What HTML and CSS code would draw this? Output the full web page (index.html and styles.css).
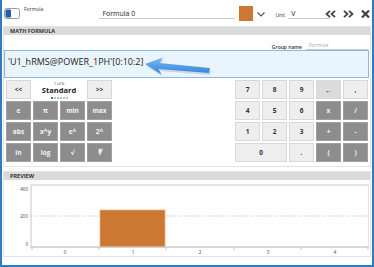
FILE: index.html
```html
<!DOCTYPE html>
<html lang="en">
<head>
    <meta charset="UTF-8">
    <title>Math Formula</title>
    <link rel="stylesheet" href="styles.css">
</head>
<body>
    <div class="window">
        <div class="topbar">
            <svg class="toggle" width="16" height="11" viewBox="0 0 16 11">
                <rect x="0.5" y="0.5" width="15" height="10" rx="2" fill="#fff" stroke="#9c9c9c"/>
                <rect x="1.5" y="1.5" width="5.5" height="8" rx="1" fill="#1f5fb2"/>
            </svg>
            <span class="small-label">Formula</span>
            <div class="line-input name-input">Formula 0</div>
            <div class="swatch"></div>
            <svg class="chevron" width="8" height="5" viewBox="0 0 8 5">
                <polyline points="0.5,0.5 4,4 7.5,0.5" fill="none" stroke="#555" stroke-width="1.2"/>
            </svg>
            <span class="small-label unit-label">Unit</span>
            <div class="line-input unit-input">V</div>
            <div class="nav">
                <svg width="11" height="8" viewBox="0 0 11 8">
                    <polyline points="5,0.8 1.5,4 5,7.2" fill="none" stroke="#444" stroke-width="1.8"/>
                    <polyline points="10,0.8 6.5,4 10,7.2" fill="none" stroke="#444" stroke-width="1.8"/>
                </svg>
                <svg width="11" height="8" viewBox="0 0 11 8">
                    <polyline points="1,0.8 4.5,4 1,7.2" fill="none" stroke="#444" stroke-width="1.8"/>
                    <polyline points="6,0.8 9.5,4 6,7.2" fill="none" stroke="#444" stroke-width="1.8"/>
                </svg>
                <svg width="9" height="8" viewBox="0 0 9 8">
                    <line x1="1" y1="0.5" x2="8" y2="7.5" stroke="#444" stroke-width="2.2"/>
                    <line x1="8" y1="0.5" x2="1" y2="7.5" stroke="#444" stroke-width="2.2"/>
                </svg>
            </div>
        </div>

        <div class="panel formula-panel">
            <div class="panel-title">MATH FORMULA</div>
            <div class="group-row">
                <span class="group-label">Group name</span>
                <div class="line-input group-input">Formula</div>
            </div>
            <div class="formula-box">'U1_hRMS@POWER_1PH'[0:10:2]</div>

            <svg class="pointer" width="70" height="22" viewBox="0 0 70 22">
                <defs>
                    <linearGradient id="arrowFill" x1="0" y1="0" x2="0" y2="1">
                        <stop offset="0" stop-color="#7ab8f2"/>
                        <stop offset="1" stop-color="#2f86dc"/>
                    </linearGradient>
                </defs>
                <polygon points="1,7 19,0.5 15.5,6 66,11 65,16 14.5,12 17.5,17.5" fill="#9aa4b0" opacity="0.35" transform="translate(1,2)"/>
                <polygon points="1,7 19,0.5 15.5,6 66,11 65,16 14.5,12 17.5,17.5" fill="url(#arrowFill)"/>
            </svg>

            <div class="keypads">
                <div class="pad pad-left">
                    <button class="key light">&lt;&lt;</button>
                    <div class="pager">
                        <span class="pager-count">1 of 6</span>
                        <span class="pager-name">Standard</span>
                        <span class="pager-dots"><i class="on"></i><i></i><i></i><i></i><i></i><i></i></span>
                    </div>
                    <button class="key light">&gt;&gt;</button>
                    <button class="key dark">e</button>
                    <button class="key dark">π</button>
                    <button class="key dark">min</button>
                    <button class="key dark">max</button>
                    <button class="key dark">abs</button>
                    <button class="key dark">x^y</button>
                    <button class="key dark">e^</button>
                    <button class="key dark">2^</button>
                    <button class="key dark">ln</button>
                    <button class="key dark">log</button>
                    <button class="key dark">√</button>
                    <button class="key dark">∛</button>
                </div>
                <div class="pad pad-right">
                    <button class="key light">7</button>
                    <button class="key light">8</button>
                    <button class="key light">9</button>
                    <button class="key mid">←</button>
                    <button class="key light">,</button>
                    <button class="key light">4</button>
                    <button class="key light">5</button>
                    <button class="key light">6</button>
                    <button class="key dark">x</button>
                    <button class="key dark">/</button>
                    <button class="key light">1</button>
                    <button class="key light">2</button>
                    <button class="key light">3</button>
                    <button class="key dark">+</button>
                    <button class="key dark">-</button>
                    <button class="key light wide">0</button>
                    <button class="key light">.</button>
                    <button class="key dark">(</button>
                    <button class="key dark">)</button>
                </div>
            </div>
        </div>

        <div class="panel preview-panel">
            <div class="panel-title">PREVIEW</div>
            <svg class="chart" width="364" height="76" viewBox="0 0 364 76">
                <rect x="26" y="5" width="338" height="62" fill="#fff" stroke="#dcdcdc" stroke-width="1.6"/>
                <line x1="26" y1="36" x2="364" y2="36" stroke="#b8b8b8" stroke-width="0.8" stroke-dasharray="1.5,1.5"/>
                <rect x="95" y="30" width="65" height="37" fill="#cc7732" stroke="#e6b08a" stroke-width="0.8"/>
                <line x1="26" y1="67" x2="364" y2="67" stroke="#cfcfcf" stroke-width="1.2"/>
                <g stroke="#bbb" stroke-width="0.8">
                    <line x1="27" y1="67" x2="27" y2="70"/>
                    <line x1="94" y1="67" x2="94" y2="70"/>
                    <line x1="161" y1="67" x2="161" y2="70"/>
                    <line x1="229" y1="67" x2="229" y2="70"/>
                    <line x1="296" y1="67" x2="296" y2="70"/>
                    <line x1="363" y1="67" x2="363" y2="70"/>
                </g>
                <g class="axis-text" text-anchor="end">
                    <text x="23" y="11">400</text>
                    <text x="23" y="38">200</text>
                    <text x="23" y="66">0</text>
                </g>
                <g class="axis-text" text-anchor="middle">
                    <text x="60" y="74">0</text>
                    <text x="128" y="74">1</text>
                    <text x="195" y="74">2</text>
                    <text x="263" y="74">3</text>
                    <text x="330" y="74">4</text>
                </g>
            </svg>
        </div>
    </div>
</body>
</html>
```

FILE: styles.css
```css
* {
    margin: 0;
    padding: 0;
    box-sizing: border-box;
}

body {
    font-family: 'Open Sans', 'Liberation Sans', sans-serif;
    background: #ffffff;
    color: #333333;
}

.window {
    width: 374px;
    height: 267px;
    border: 2px solid #2f7bc4;
    border-top: none;
    padding: 0 1px;
    background: #ffffff;
}

/* top bar */

.topbar {
    height: 26px;
    display: flex;
    align-items: flex-start;
    position: relative;
}

.toggle {
    margin: 8px 0 0 1px;
}

.small-label {
    font-size: 5px;
    color: #333;
    margin: 6px 0 0 4px;
}

.line-input {
    border-bottom: 1px solid #c8c8c8;
    font-size: 7px;
    color: #222;
    line-height: 8px;
    padding-left: 3px;
}

.name-input {
    width: 136px;
    margin: 10px 0 0 56px;
}

.swatch {
    width: 14px;
    height: 15px;
    background: #cc7732;
    margin: 6px 0 0 4px;
}

.chevron {
    margin: 12px 0 0 4px;
}

.unit-label {
    margin: 12px 0 0 10px;
}

.unit-input {
    width: 42px;
    margin: 10px 0 0 3px;
}

.nav {
    display: flex;
    gap: 7px;
    margin: 10px 0 0 -5px;
    align-items: center;
}

/* panels */

.panel {
    border: 1px solid #e4e4e4;
    position: relative;
}

.panel-title {
    background: #dadada;
    height: 8px;
    font-size: 5.5px;
    font-weight: 700;
    line-height: 8px;
    padding-left: 6px;
    color: #333;
}

.formula-panel {
    height: 141px;
}

.group-row {
    display: flex;
    justify-content: flex-end;
    align-items: flex-end;
    margin-top: 7px;
    padding-right: 2px;
    gap: 4px;
}

.group-label {
    font-size: 5px;
    font-weight: 600;
    color: #333;
}

.group-input {
    width: 62px;
    font-size: 5px;
    color: #aaa;
    line-height: 7px;
}

.formula-box {
    width: 365px;
    height: 28px;
    background: #eaf4fd;
    border: 1px solid #8bb9e6;
    font-size: 9px;
    line-height: 12px;
    padding: 5px 0 0 3px;
    color: #1c1c1c;
}

.pointer {
    position: absolute;
    left: 140px;
    top: 30px;
}

.keypads {
    display: flex;
    justify-content: space-between;
    margin-top: 2px;
    padding: 0 2px;
}

.pad {
    display: grid;
    grid-template-columns: repeat(4, 25px);
    grid-auto-rows: 19px;
    gap: 2px;
}

.pad-right {
    grid-template-columns: repeat(5, 25px);
}

.key {
    font-family: inherit;
    font-size: 6.5px;
    font-weight: 700;
    border: 1px solid #d8d8d8;
    cursor: pointer;
}

.key.light {
    background: #eeeeee;
    color: #333;
}

.key.mid {
    background: #dcdcdc;
    color: #333;
    font-size: 8px;
}

.key.dark {
    background: #8d8d8d;
    border-color: #a0a0a0;
    color: #f4f4f4;
}

.key.wide {
    grid-column: span 2;
}

.pager {
    grid-column: span 2;
    display: flex;
    flex-direction: column;
    align-items: center;
}

.pager-count {
    font-size: 4px;
    line-height: 5px;
    margin-top: 1px;
}

.pager-name {
    font-size: 7.5px;
    font-weight: 700;
    line-height: 9px;
    color: #222;
}

.pager-dots {
    display: flex;
    gap: 1px;
    margin-top: 2px;
}

.pager-dots i {
    width: 2px;
    height: 1.5px;
    background: #bbb;
}

.pager-dots i.on {
    background: #2f6fb8;
}

.preview-panel {
    margin-top: 4px;
}

.chart {
    display: block;
    margin-left: 1px;
}

.axis-text {
    font-size: 4.5px;
    fill: #444;
}
```
